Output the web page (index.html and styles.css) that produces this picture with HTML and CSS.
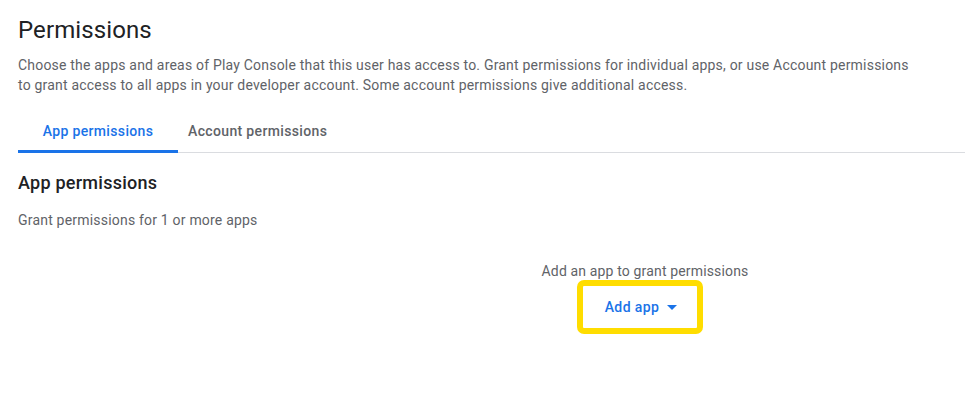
FILE: index.html
```html
<!DOCTYPE html>
<html lang="en">
<head>
    <meta charset="UTF-8">
    <title>Permissions</title>
    <link rel="stylesheet" href="styles.css">
</head>
<body>
    <div class="page">
        <h1 class="title">Permissions</h1>
        <p class="intro">Choose the apps and areas of Play Console that this user has access to. Grant permissions for individual apps, or use Account permissions to grant access to all apps in your developer account. Some account permissions give additional access.</p>

        <div class="tabs">
            <div class="tab active">App permissions</div>
            <div class="tab">Account permissions</div>
        </div>

        <h2 class="section-title">App permissions</h2>
        <p class="section-sub">Grant permissions for 1 or more apps</p>

        <div class="empty">
            <p class="empty-text">Add an app to grant permissions</p>
            <div class="highlight">
                <button class="add-btn">Add app <span class="caret"></span></button>
            </div>
        </div>
    </div>
</body>
</html>
```

FILE: styles.css
```css
html, body {
    overflow: hidden;
}
body {
    margin: 0;
    padding: 0 0 0 18px;
    font-family: Roboto, "Liberation Sans", sans-serif;
    background-color: #fff;
    color: #202124;
}
.page {
    width: 1254px;
}
.title {
    font-size: 24px;
    font-weight: 400;
    line-height: 32px;
    margin: 14px 0 0;
    letter-spacing: 0.1px;
}
.intro {
    font-size: 14px;
    line-height: 20px;
    color: #5f6368;
    max-width: 900px;
    margin: 9px 0 0;
    letter-spacing: 0.2px;
}
.tabs {
    display: flex;
    margin-top: 17px;
    border-bottom: 1px solid #dadce0;
    width: 947px;
}
.tab {
    font-size: 14px;
    font-weight: 500;
    color: #5f6368;
    box-sizing: border-box;
    height: 41px;
    line-height: 38px;
    padding: 0 10px;
    letter-spacing: 0.35px;
    border-bottom: 3px solid transparent;
    margin-bottom: -1px;
}
.tab.active {
    color: #1a73e8;
    width: 160px;
    padding: 0;
    text-align: center;
    border-bottom-color: #1a73e8;
    border-radius: 3px 3px 0 0;
}
.section-title {
    font-size: 18px;
    font-weight: 500;
    line-height: 24px;
    margin: 18px 0 0;
    letter-spacing: 0.25px;
}
.section-sub {
    font-size: 14px;
    line-height: 20px;
    color: #5f6368;
    margin: 15px 0 0;
    letter-spacing: 0.2px;
}
.empty {
    display: flex;
    flex-direction: column;
    align-items: center;
    margin-top: 31px;
}
.empty-text {
    font-size: 14px;
    line-height: 20px;
    color: #5f6368;
    margin: 0;
    letter-spacing: 0.15px;
}
.highlight {
    margin: -1px 10px 0 0;
    border: 6px solid #ffdd00;
    border-radius: 7px;
    padding: 5px 0;
}
.add-btn {
    font-family: Roboto, "Liberation Sans", sans-serif;
    font-size: 14px;
    font-weight: 500;
    color: #1a73e8;
    background: none;
    border: none;
    padding: 0 20px 0 22px;
    height: 32px;
    display: flex;
    align-items: center;
    gap: 8px;
    letter-spacing: 0.4px;
}
.caret {
    width: 0;
    height: 0;
    border-left: 5px solid transparent;
    border-right: 5px solid transparent;
    border-top: 5px solid #1a73e8;
}
```
